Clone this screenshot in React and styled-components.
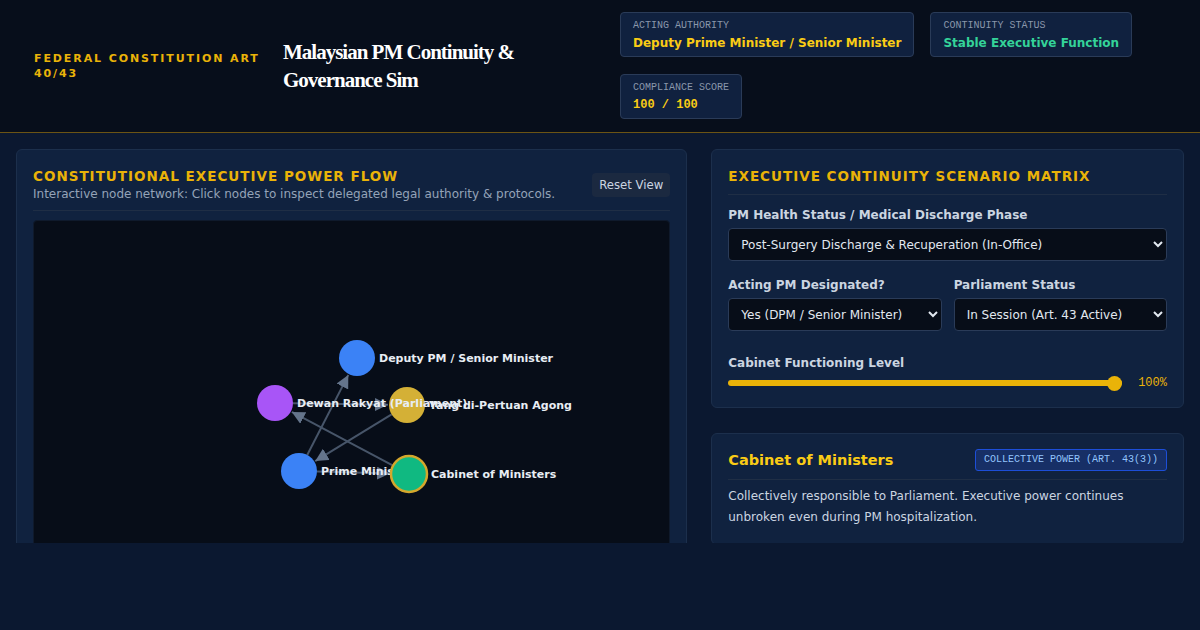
import { useState } from "react";
import styled, { createGlobalStyle } from "styled-components";

const GlobalStyle = createGlobalStyle`
  * { box-sizing: border-box; }
  body {
    margin: 0;
    background: #0b1830;
    color: #e2e8f0;
    font-family: "DejaVu Sans", sans-serif;
  }
`;

// graph nodes, positions are in canvas space
const NODES = [
  { id: "agong", label: "Yang di-Pertuan Agong", x: 373, y: 184, color: "#d4b036" },
  { id: "dewan", label: "Dewan Rakyat (Parliament)", x: 241, y: 182, color: "#a855f7" },
  { id: "pm", label: "Prime Minister", x: 265, y: 250, color: "#3b82f6" },
  { id: "deputy", label: "Deputy PM / Senior Minister", x: 323, y: 137, color: "#3b82f6" },
  { id: "cabinet", label: "Cabinet of Ministers", x: 375, y: 253, color: "#10b981", active: true },
];

const EDGES = [
  ["pm", "deputy"],
  ["agong", "pm"],
  ["cabinet", "dewan"],
  ["dewan", "agong"],
  ["pm", "cabinet"],
];

const R = 18;

export default function App() {
  const [health, setHealth] = useState("discharge");
  const [acting, setActing] = useState("yes");
  const [parliament, setParliament] = useState("session");
  const [cabinet, setCabinet] = useState(100);

  const byId = Object.fromEntries(NODES.map((n) => [n.id, n]));

  return (
    <>
      <GlobalStyle />
      <Header>
        <Brand>FEDERAL CONSTITUTION ART 40/43</Brand>
        <Title>Malaysian PM Continuity &amp; Governance Sim</Title>
        <Stats>
          <StatCard>
            <StatLabel>ACTING AUTHORITY</StatLabel>
            <StatValue $tone="#facc15">Deputy Prime Minister / Senior Minister</StatValue>
          </StatCard>
          <StatCard>
            <StatLabel>CONTINUITY STATUS</StatLabel>
            <StatValue $tone="#34d399">Stable Executive Function</StatValue>
          </StatCard>
          <StatCard>
            <StatLabel>COMPLIANCE SCORE</StatLabel>
            <StatValue $tone="#facc15" $mono>100 / 100</StatValue>
          </StatCard>
        </Stats>
      </Header>

      <Main>
        <Panel>
          <PanelHead>
            <div>
              <PanelTitle>CONSTITUTIONAL EXECUTIVE POWER FLOW</PanelTitle>
              <PanelSub>
                Interactive node network: Click nodes to inspect delegated legal authority &amp; protocols.
              </PanelSub>
            </div>
            <GhostButton>Reset View</GhostButton>
          </PanelHead>
          <Canvas>
            <svg width="635" height="420" viewBox="0 0 635 420">
              <defs>
                <marker id="arrow" viewBox="0 0 10 10" refX="10" refY="5" markerWidth="6.5" markerHeight="6.5" orient="auto">
                  <path d="M0 0 L10 5 L0 10 z" fill="#64748b" />
                </marker>
              </defs>
              {EDGES.map(([a, b]) => {
                const s = byId[a];
                const t = byId[b];
                const dx = t.x - s.x;
                const dy = t.y - s.y;
                const d = Math.hypot(dx, dy);
                const ux = dx / d;
                const uy = dy / d;
                return (
                  <line
                    key={a + b}
                    x1={s.x + ux * R}
                    y1={s.y + uy * R}
                    x2={t.x - ux * (R + 1)}
                    y2={t.y - uy * (R + 1)}
                    stroke="#475569"
                    strokeWidth="2"
                    markerEnd="url(#arrow)"
                  />
                );
              })}
              {NODES.map((n) => (
                <g key={n.id}>
                  <circle
                    cx={n.x}
                    cy={n.y}
                    r={R}
                    fill={n.color}
                    stroke={n.active ? "#d4a72c" : "none"}
                    strokeWidth={n.active ? 2.5 : 0}
                  />
                  <NodeLabel x={n.x + R + 4} y={n.y + 4}>
                    {n.label}
                  </NodeLabel>
                </g>
              ))}
            </svg>
          </Canvas>
        </Panel>

        <Column>
          <Panel $bottom={17}>
            <PanelTitle>EXECUTIVE CONTINUITY SCENARIO MATRIX</PanelTitle>
            <Divider />
            <Field>
              <FieldLabel>PM Health Status / Medical Discharge Phase</FieldLabel>
              <Select value={health} onChange={(e) => setHealth(e.target.value)}>
                <option value="discharge">Post-Surgery Discharge &amp; Recuperation (In-Office)</option>
                <option value="icu">Hospitalised (ICU)</option>
              </Select>
            </Field>
            <FieldRow>
              <Field>
                <FieldLabel>Acting PM Designated?</FieldLabel>
                <Select value={acting} onChange={(e) => setActing(e.target.value)}>
                  <option value="yes">Yes (DPM / Senior Minister)</option>
                  <option value="no">No</option>
                </Select>
              </Field>
              <Field>
                <FieldLabel>Parliament Status</FieldLabel>
                <Select value={parliament} onChange={(e) => setParliament(e.target.value)}>
                  <option value="session">In Session (Art. 43 Active)</option>
                  <option value="prorogued">Prorogued</option>
                </Select>
              </Field>
            </FieldRow>
            <Field $top={25}>
              <FieldLabel>Cabinet Functioning Level</FieldLabel>
              <SliderRow>
                <Range
                  type="range"
                  min="0"
                  max="100"
                  value={cabinet}
                  onChange={(e) => setCabinet(Number(e.target.value))}
                />
                <RangeValue>{cabinet}%</RangeValue>
              </SliderRow>
            </Field>
          </Panel>

          <Panel $top={15}>
            <InfoHead>
              <InfoTitle>Cabinet of Ministers</InfoTitle>
              <Badge>COLLECTIVE POWER (ART. 43(3))</Badge>
            </InfoHead>
            <InfoText>
              Collectively responsible to Parliament. Executive power continues unbroken even during PM
              hospitalization.
            </InfoText>
          </Panel>
        </Column>
      </Main>
    </>
  );
}

const Header = styled.header`
  display: flex;
  align-items: center;
  gap: 23px;
  padding: 12px 34px 13px;
  background: #070e1b;
  border-bottom: 1px solid #6b5414;
`;

const Brand = styled.div`
  flex: 0 0 226px;
  font-size: 11px;
  font-weight: 700;
  letter-spacing: 1.9px;
  line-height: 15px;
  color: #eab308;
`;

const Title = styled.h1`
  flex: 0 0 314px;
  margin: 0;
  font-family: "Liberation Serif", serif;
  font-size: 21px;
  line-height: 28px;
  font-weight: 700;
  letter-spacing: -1px;
  color: #ffffff;
`;

const Stats = styled.div`
  flex: 1;
  display: flex;
  flex-wrap: wrap;
  gap: 17px 16px;
  max-width: 546px;
`;

const StatCard = styled.div`
  padding: 7px 12px 5px;
  background: #10213f;
  border: 1px solid #2a3b58;
  border-radius: 4px;
`;

const StatLabel = styled.div`
  font-family: "Liberation Mono", monospace;
  font-size: 10px;
  line-height: 12px;
  color: #8a97ab;
`;

const StatValue = styled.div`
  margin-top: 3px;
  font-family: ${(p) => (p.$mono ? '"Liberation Mono", monospace' : '"DejaVu Sans", sans-serif')};
  font-size: 12px;
  line-height: 16px;
  font-weight: 700;
  color: ${(p) => p.$tone};
`;

const Main = styled.main`
  display: grid;
  grid-template-columns: minmax(0, 1.42fr) minmax(0, 1fr);
  gap: 24px;
  align-items: start;
  height: 410px;
  padding: 16px;
  overflow: hidden;
`;

const Column = styled.div`
  display: flex;
  flex-direction: column;
  gap: 25px;
`;

const Panel = styled.section`
  padding: ${(p) => p.$top ?? 16}px 16px ${(p) => p.$bottom ?? 16}px;
  background: #10223f;
  border: 1px solid #1c2f4c;
  border-radius: 6px;
`;

const PanelHead = styled.div`
  display: flex;
  justify-content: space-between;
  align-items: center;
  padding-bottom: 7px;
  border-bottom: 1px solid #1f2e45;
  margin-bottom: 9px;
`;

const PanelTitle = styled.h2`
  margin: 0;
  font-size: 13.5px;
  line-height: 20px;
  font-weight: 700;
  letter-spacing: 1px;
  color: #eab308;
`;

const PanelSub = styled.p`
  margin: 0;
  font-size: 12px;
  line-height: 17px;
  color: #94a3b8;
`;

const GhostButton = styled.button`
  padding: 5px 7px;
  font-family: "DejaVu Sans Condensed", "DejaVu Sans", sans-serif;
  font-size: 13px;
  line-height: 14px;
  color: #cbd5e1;
  background: #1b2940;
  border: none;
  border-radius: 4px;
  cursor: pointer;
`;

const Canvas = styled.div`
  height: 420px;
  background: #070d18;
  border: 1px solid #0f1a2c;
  border-radius: 4px;
  overflow: hidden;
`;

const NodeLabel = styled.text`
  font-family: "DejaVu Sans", sans-serif;
  font-size: 11px;
  font-weight: 700;
  fill: #e8edf4;
`;

const Divider = styled.div`
  height: 1px;
  margin: 8px 0 13px;
  background: #1f2e45;
`;

const Field = styled.div`
  display: flex;
  flex-direction: column;
  gap: 5px;
  min-width: 0;
  margin-top: ${(p) => (p.$top ? `${p.$top}px` : "0")};
`;

const FieldRow = styled.div`
  display: grid;
  grid-template-columns: 1fr 1fr;
  gap: 12px;
  margin-top: 17px;
`;

const FieldLabel = styled.label`
  font-size: 12px;
  line-height: 15px;
  font-weight: 700;
  color: #cbd5e1;
`;

const Select = styled.select`
  width: 100%;
  height: 33px;
  padding: 0 8px;
  font-family: "DejaVu Sans", sans-serif;
  font-size: 12px;
  color: #e2e8f0;
  background: #070d18;
  border: 1px solid #2a3b58;
  border-radius: 4px;
`;

const SliderRow = styled.div`
  display: flex;
  align-items: center;
  gap: 16px;
  height: 14px;
`;

const Range = styled.input`
  flex: 1;
  height: 6px;
  margin: 0;
  appearance: none;
  background: #eab308;
  border-radius: 3px;

  &::-webkit-slider-thumb {
    appearance: none;
    width: 15px;
    height: 15px;
    border-radius: 50%;
    background: #eab308;
  }
`;

const RangeValue = styled.span`
  font-family: "Liberation Mono", monospace;
  font-size: 12px;
  color: #eab308;
`;

const InfoHead = styled.div`
  display: flex;
  justify-content: space-between;
  align-items: center;
  padding-bottom: 8px;
  border-bottom: 1px solid #1f2e45;
`;

const InfoTitle = styled.h3`
  margin: 0;
  font-size: 14.5px;
  font-weight: 700;
  color: #facc15;
`;

const Badge = styled.span`
  padding: 4px 8px;
  font-family: "Liberation Mono", monospace;
  font-size: 10px;
  line-height: 12px;
  color: #93c5fd;
  background: #172f66;
  border: 1px solid #1d4ed8;
  border-radius: 3px;
`;

const InfoText = styled.p`
  margin: 6px 0 0;
  font-size: 12px;
  line-height: 21px;
  color: #cbd5e1;
`;
